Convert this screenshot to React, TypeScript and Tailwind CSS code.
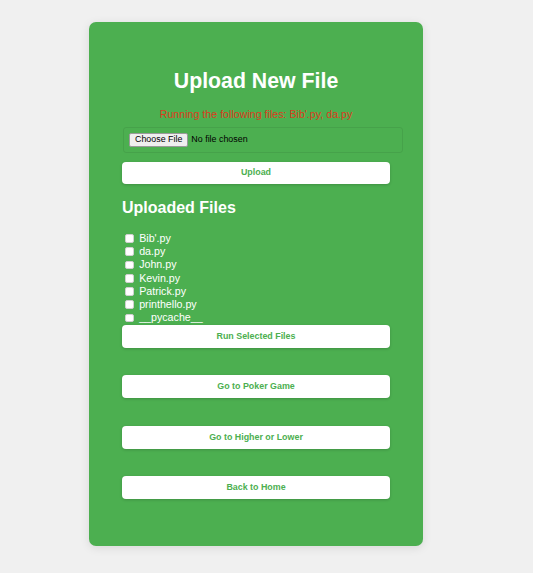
const files = ["Bib'.py", "da.py", "John.py", "Kevin.py", "Patrick.py", "printhello.py", "__pycache__"];

function WhiteButton({ label }: { label: string }) {
  return (
    <button className="h-[23px] w-full rounded-[4px] bg-white text-[8.9px] font-bold text-[#4caf50] shadow-[0_1px_3px_rgba(0,0,0,0.18)]">
      {label}
    </button>
  );
}

export default function App() {
  return (
    <div className="min-h-screen bg-[#f0f0f0] pt-[22px] pb-[27px] font-['Liberation_Sans',Arial,sans-serif]">
      <div className="ml-[89px] flex w-[334px] flex-col rounded-[7px] bg-[#4caf50] px-[33px] pt-[47px] pb-[47px] shadow-[0_2px_10px_rgba(0,0,0,0.1)]">
        <h1 className="text-center text-[21.3px] font-bold leading-[25px] text-white">Upload New File</h1>
        <p className="mt-[14px] text-center text-[10.67px] leading-[12px] text-[#dc3b1e]">
          Running the following files: Bib'.py, da.py
        </p>

        <div className="mt-[7px] ml-px flex h-[26px] w-[280px] items-center rounded-[3px] border border-[rgba(0,0,0,0.07)] pl-[5px]">
          <span className="flex h-[14px] items-center rounded-[2px] border border-[#9a9a9a] bg-[#efefef] px-[5px] text-[8.9px] text-black">
            Choose File
          </span>
          <span className="ml-[3px] text-[8.9px] text-black">No file chosen</span>
        </div>

        <div className="mt-[5px]">
          <button className="h-[22px] w-full rounded-[4px] bg-white text-[8.9px] font-bold text-[#4caf50] shadow-[0_1px_3px_rgba(0,0,0,0.18)]">
            Upload
          </button>
        </div>

        <h2 className="mt-[15px] text-[16px] font-bold leading-[18px] text-white">Uploaded Files</h2>

        <ul className="mt-[15px]">
          {files.map((f) => (
            <li key={f} className="flex h-[13.3px] items-center text-[10.67px] leading-[13.3px] text-white">
              <span className="ml-[3px] mr-[5.5px] h-[8.7px] w-[8.7px] rounded-[2px] border border-[#d0d0d0] bg-white" />
              {f}
            </li>
          ))}
        </ul>

        <div className="flex flex-col gap-[27.5px]">
          <WhiteButton label="Run Selected Files" />
          <WhiteButton label="Go to Poker Game" />
          <WhiteButton label="Go to Higher or Lower" />
          <WhiteButton label="Back to Home" />
        </div>
      </div>
    </div>
  );
}
